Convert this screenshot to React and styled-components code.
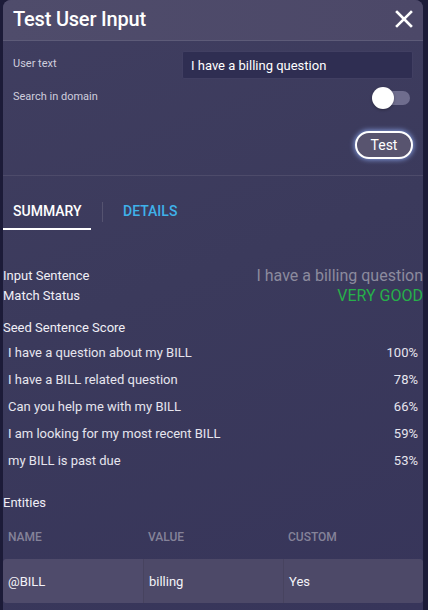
import React, { useState } from 'react';
import styled, { createGlobalStyle } from 'styled-components';

const GlobalStyle = createGlobalStyle`
  html, body {
    margin: 0;
    padding: 0;
    background: #1c1b38;
    font-family: Roboto, "Liberation Sans", sans-serif;
  }
  * { box-sizing: border-box; }
`;

const Page = styled.div`
  width: 428px;
  height: 610px;
  overflow: hidden;
  padding: 0 5px 0 3px;
`;

const Panel = styled.div`
  height: 100%;
  border-radius: 8px 8px 0 0;
  background: linear-gradient(160deg, #403e60 0%, #3b3a5c 45%, #37355a 100%);
  color: #fff;
`;

const Header = styled.div`
  height: 41px;
  display: flex;
  align-items: center;
  justify-content: space-between;
  padding: 0 10px 2px 10px;
  background: linear-gradient(90deg, #4f4c6b 0%, #4c4868 100%);
  border-bottom: 1px solid #5d5b78;
  border-radius: 8px 8px 0 0;
`;

const Title = styled.h1`
  margin: 0;
  font-size: 20px;
  font-weight: 500;
  letter-spacing: -0.2px;
`;

const CloseButton = styled.button`
  background: none;
  border: none;
  padding: 0;
  width: 18px;
  height: 18px;
  display: flex;
  cursor: pointer;
`;

const Form = styled.div`
  padding: 10px 10px 16px 10px;
  border-bottom: 1px solid #4d4b6a;
  display: flex;
  flex-direction: column;
`;

const FormRow = styled.div`
  display: flex;
  align-items: flex-start;
  justify-content: space-between;
  height: ${(p) => p.h}px;
`;

const Label = styled.label`
  font-size: 11px;
  color: #cfcedd;
  padding-top: ${(p) => p.top || 0}px;
`;

const TextInput = styled.input`
  width: 231px;
  height: 28px;
  background: #2f2e52;
  border: 1px solid #413f62;
  border-radius: 2px;
  color: #fff;
  font-family: inherit;
  font-size: 13px;
  padding: 0 8px;
  outline: none;
`;

const Toggle = styled.button`
  position: relative;
  width: 38px;
  height: 22px;
  margin-right: 3px;
  background: none;
  border: none;
  padding: 0;
  cursor: pointer;
`;

const Track = styled.span`
  position: absolute;
  left: 11px;
  right: 0;
  top: 4px;
  height: 14px;
  border-radius: 7px;
  background: #6f6d8e;
`;

const Knob = styled.span`
  position: absolute;
  left: ${(p) => (p.on ? 16 : 0)}px;
  top: 0;
  width: 22px;
  height: 22px;
  border-radius: 50%;
  background: #fff;
  box-shadow: 0 1px 3px rgba(0, 0, 0, 0.3);
`;

const ButtonRow = styled.div`
  display: flex;
  justify-content: flex-end;
`;

const TestButton = styled.button`
  width: 58px;
  height: 28px;
  border-radius: 14px;
  border: 2px solid #fff;
  background: #58546f;
  color: #fff;
  font-family: inherit;
  font-size: 14px;
  box-shadow: 0 0 5px 1px rgba(150, 180, 255, 0.75);
  cursor: pointer;
`;

const Tabs = styled.div`
  display: flex;
  align-items: center;
  margin-top: 24px;
  height: 30px;
`;

const Tab = styled.button`
  background: none;
  border: none;
  border-bottom: 2px solid ${(p) => (p.active ? '#fff' : 'transparent')};
  padding: 0 10px 6px 10px;
  width: ${(p) => p.w}px;
  text-align: left;
  height: 30px;
  font-family: inherit;
  font-size: 14px;
  font-weight: 500;
  color: ${(p) => (p.active ? '#fff' : '#3fb2ea')};
  cursor: pointer;
`;

const TabDivider = styled.span`
  width: 1px;
  height: 20px;
  margin: 0 10px 6px 11px;
  background: #555370;
`;

const MatchBlock = styled.div`
  margin-top: 36px;
  display: grid;
  grid-template-columns: 1fr auto;
  align-items: end;
`;

const KeyText = styled.div`
  font-size: 13px;
  color: #f0eff6;
  line-height: 20px;
`;

const ValueText = styled.div`
  font-size: 16px;
  line-height: 20px;
  text-align: right;
  color: ${(p) => p.color};
`;

const SectionTitle = styled.div`
  font-size: 13px;
  color: #f0eff6;
  margin-top: ${(p) => p.top}px;
  line-height: 18px;
`;

const ScoreList = styled.div`
  display: flex;
  flex-direction: column;
  margin-top: 2px;
`;

const ScoreRow = styled.div`
  display: flex;
  justify-content: space-between;
  height: 27px;
  align-items: center;
  padding: 0 5px 0 5px;
  font-size: 13px;
  color: #e6e5ee;
`;

const Table = styled.div`
  margin-top: 12px;
`;

const HeadRow = styled.div`
  display: grid;
  grid-template-columns: 140px 140px 1fr;
  height: 26px;
  align-items: center;
`;

const HeadCell = styled.div`
  font-size: 12px;
  font-weight: 500;
  color: #858399;
  padding-left: 5px;
  text-transform: uppercase;
`;

const BodyRow = styled.div`
  display: grid;
  grid-template-columns: 140px 140px 1fr;
  height: 44px;
  margin-top: 9px;
  border-radius: 4px;
  background: #4e4a69;
  overflow: hidden;
`;

const Cell = styled.div`
  display: flex;
  align-items: center;
  padding-left: 5px;
  font-size: 13px;
  color: #f4f3f8;
  background: ${(p) => (p.first ? '#4f4b6b' : '#4d4968')};
  border-left: ${(p) => (p.first ? 'none' : '1px solid #47435f')};
`;

const seeds = [
  ['I have a question about my BILL', '100%'],
  ['I have a BILL related question', '78%'],
  ['Can you help me with my BILL', '66%'],
  ['I am looking for my most recent BILL', '59%'],
  ['my BILL is past due', '53%'],
];

export default function App() {
  const [text, setText] = useState('I have a billing question');
  const [inDomain, setInDomain] = useState(false);
  const [tab, setTab] = useState('summary');

  return (
    <>
      <GlobalStyle />
      <Page>
        <Panel>
          <Header>
            <Title>Test User Input</Title>
            <CloseButton aria-label="Close">
              <svg width="18" height="18" viewBox="0 0 18 18">
                <path d="M2 2 L16 16 M16 2 L2 16" stroke="#fff" strokeWidth="2.6" strokeLinecap="square" />
              </svg>
            </CloseButton>
          </Header>
          <Form>
            <FormRow h={36}>
              <Label top={6}>User text</Label>
              <TextInput value={text} onChange={(e) => setText(e.target.value)} />
            </FormRow>
            <FormRow h={44}>
              <Label top={3}>Search in domain</Label>
              <Toggle onClick={() => setInDomain(!inDomain)}>
                <Track />
                <Knob on={inDomain} />
              </Toggle>
            </FormRow>
            <ButtonRow>
              <TestButton>Test</TestButton>
            </ButtonRow>
          </Form>
          <Tabs>
            <Tab w={88} active={tab === 'summary'} onClick={() => setTab('summary')}>
              SUMMARY
            </Tab>
            <TabDivider />
            <Tab w={90} active={tab === 'details'} onClick={() => setTab('details')}>
              DETAILS
            </Tab>
          </Tabs>
          <MatchBlock>
            <KeyText>Input Sentence</KeyText>
            <ValueText color="#8c8b9e">I have a billing question</ValueText>
            <KeyText>Match Status</KeyText>
            <ValueText color="#27b04a">VERY GOOD</ValueText>
          </MatchBlock>
          <SectionTitle top={13}>Seed Sentence Score</SectionTitle>
          <ScoreList>
            {seeds.map(([s, v]) => (
              <ScoreRow key={s}>
                <span>{s}</span>
                <span>{v}</span>
              </ScoreRow>
            ))}
          </ScoreList>
          <SectionTitle top={20}>Entities</SectionTitle>
          <Table>
            <HeadRow>
              <HeadCell>Name</HeadCell>
              <HeadCell>Value</HeadCell>
              <HeadCell>Custom</HeadCell>
            </HeadRow>
            <BodyRow>
              <Cell first>@BILL</Cell>
              <Cell>billing</Cell>
              <Cell>Yes</Cell>
            </BodyRow>
          </Table>
        </Panel>
      </Page>
    </>
  );
}
